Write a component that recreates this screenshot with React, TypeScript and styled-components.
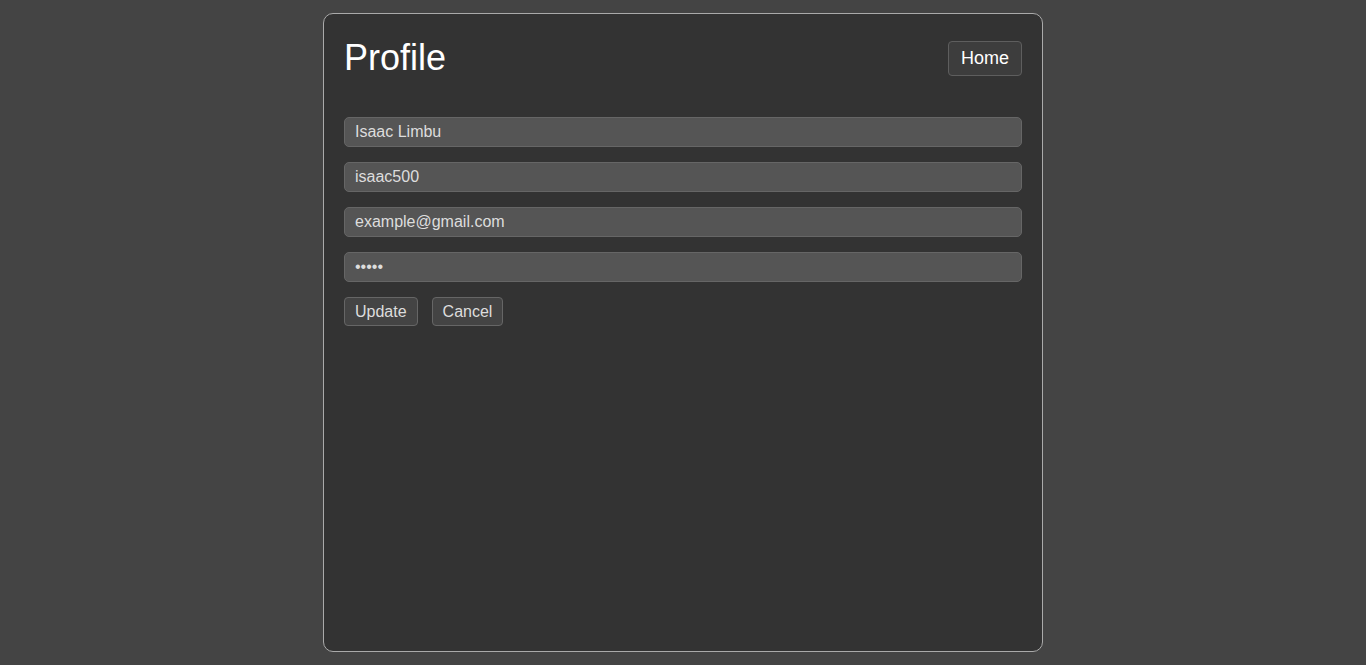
import styled, { createGlobalStyle } from 'styled-components';

const GlobalStyle = createGlobalStyle`
  html, body {
    margin: 0;
    padding: 0;
    background-color: #444444;
    font-family: 'Liberation Sans', Arial, sans-serif;
  }
  * {
    box-sizing: border-box;
  }
`;

export default function App() {
  return (
    <>
      <GlobalStyle />
      <Page>
        <Card>
          <Header>
            <Title>Profile</Title>
            <HomeButton>Home</HomeButton>
          </Header>
          <Form onSubmit={(e) => e.preventDefault()}>
            <Field type="text" defaultValue="Isaac Limbu" />
            <Field type="text" defaultValue="isaac500" />
            <Field type="email" defaultValue="example@gmail.com" />
            <Field type="password" defaultValue="12345" />
            <Actions>
              <ActionButton type="submit">Update</ActionButton>
              <ActionButton type="button">Cancel</ActionButton>
            </Actions>
          </Form>
        </Card>
      </Page>
    </>
  );
}

const Page = styled.div`
  display: flex;
  justify-content: center;
  padding: 13px 0;
  min-height: 100vh;
`;

const Card = styled.div`
  width: 720px;
  height: 639px;
  background-color: #333333;
  border: 1px solid #aaaaaa;
  border-radius: 10px;
  padding: 20px;
`;

const Header = styled.header`
  display: flex;
  justify-content: space-between;
  align-items: center;
  height: 48px;
  margin-bottom: 35px;
`;

const Title = styled.h1`
  margin: 0;
  font-size: 36px;
  font-weight: 400;
  color: #ffffff;
`;

const HomeButton = styled.button`
  height: 35px;
  width: 74px;
  font-family: inherit;
  font-size: 18px;
  color: #ffffff;
  background-color: #3d3d3d;
  border: 1px solid #5e5e5e;
  border-radius: 4px;
  cursor: pointer;
`;

const Form = styled.form`
  display: flex;
  flex-direction: column;
  gap: 15px;
`;

const Field = styled.input`
  height: 30px;
  width: 100%;
  padding: 0 10px;
  font-family: inherit;
  font-size: 16px;
  color: #dddddd;
  background-color: #555555;
  border: 1px solid #666666;
  border-radius: 5px;
  outline: none;
`;

const Actions = styled.div`
  display: flex;
  gap: 14px;
`;

const ActionButton = styled.button`
  height: 29px;
  padding: 0 10px;
  font-family: inherit;
  font-size: 16px;
  color: #dddddd;
  background-color: #444444;
  border: 1px solid #666666;
  border-radius: 4px;
  cursor: pointer;
`;
